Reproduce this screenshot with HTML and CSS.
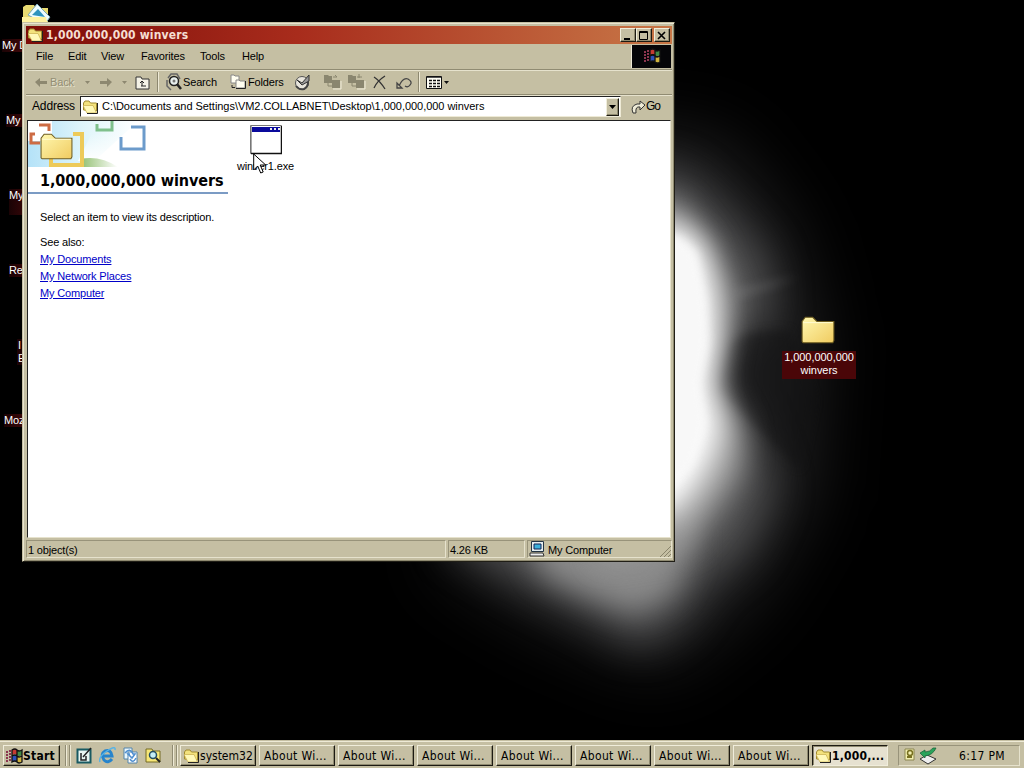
FILE: index.html
```html
<!DOCTYPE html>
<html lang="en">
<head>
    <meta charset="UTF-8">
    <title>1,000,000,000 winvers</title>
    <link rel="stylesheet" href="styles.css">
</head>
<body>
    <!-- shared icons -->
    <svg class="defs" width="0" height="0">
        <symbol id="folder-open" viewBox="0 0 16 14">
            <path d="M.5 10V3l1.500-2h4l1.500 2h6v8z" fill="#f3e27c" stroke="#a08a30"/>
            <path d="M0 5.500h10l3.500 7.500H4z" fill="#fff9b8" stroke="#c9ae4c" stroke-width=".7"/>
            <path d="M14.500 3v10.500H4" stroke="#222" fill="none"/>
        </symbol>
        <symbol id="folder-big" viewBox="0 0 34 30">
            <path d="M2 26V7l3-4h7l4 4h16v18l-1 2H3z" fill="url(#gold)" stroke="#6d5c20"/>
            <path d="M3 8h28" stroke="#fffbd0"/>
        </symbol>
        <linearGradient id="gold" x1="0" y1="0" x2="1" y2="1">
            <stop offset="0" stop-color="#fff8b0"/>
            <stop offset="1" stop-color="#f0cb60"/>
        </linearGradient>
        <symbol id="flag" viewBox="0 0 18 16">
            <path d="M7 2q3-2 5 0t5 0v5q-3 2-5 0t-5 0z" fill="#c63b32"/>
            <path d="M7 8q3-2 5 0t5 0v6q-3 2-5 0t-5 0z" fill="#2d50b8"/>
            <path d="M12 2q3 2 5 0v5q-3 2-5 0z" fill="#3f8b46"/>
            <path d="M12 8q3 2 5 0v6q-3 2-5 0z" fill="#d0b440"/>
            <path d="M7 2q3-2 5 0t5 0v12q-3 2-5 0t-5 0zM12 2v12M7 8q3-2 5 0t5 0" fill="none" stroke="#111" stroke-width="1.300"/>
            <path d="M1 4h2M4 3h2M1 7h2M4 6h2M1 10h2M4 9h2M1 13h2M4 12h2" stroke="#8c3650" stroke-width="2"/>
        </symbol>
    </svg>

    <div class="desktop">
        <svg class="wallpaper" width="1024" height="740" viewBox="0 0 1024 740">
            <defs>
                <filter id="b5" x="-50%" y="-50%" width="200%" height="200%" color-interpolation-filters="sRGB"><feGaussianBlur stdDeviation="5"/></filter>
                <filter id="b12" x="-50%" y="-50%" width="200%" height="200%" color-interpolation-filters="sRGB"><feGaussianBlur stdDeviation="14"/></filter>
                <filter id="b20" x="-50%" y="-50%" width="200%" height="200%" color-interpolation-filters="sRGB"><feGaussianBlur stdDeviation="20"/></filter>
                <filter id="b30" x="-50%" y="-50%" width="200%" height="200%" color-interpolation-filters="sRGB"><feGaussianBlur stdDeviation="34"/></filter>
            </defs>
            <path d="M600 130L720 140 790 230 820 340 810 500 750 600 660 670 540 620 440 560z" fill="#222223" filter="url(#b30)"/>
            <path d="M600 160L680 175 725 215 765 260 770 320 740 330 725 385 755 440 772 490 745 550 705 580 680 620 640 645 590 615 520 580 450 540z" fill="#525253" filter="url(#b20)"/>
            <path d="M520 530L690 520 690 560 672 595 635 612 590 596 545 575z" fill="#8a8a8a" filter="url(#b12)"/>
            <path d="M727 345Q740 330 790 330L815 400 800 470 765 435 716 390z" fill="#101011" opacity=".45" filter="url(#b5)"/>
            <path d="M580 215L676 200 714 250 734 300 726 340 718 385 744 430 742 470 720 505 690 545 600 560z" fill="#a0a0a0" filter="url(#b12)"/>
            <path d="M580 225L680 226 702 242 714 285 718 340 710 385 722 425 714 455 698 485 676 512 600 530z" fill="#fff" filter="url(#b12)"/>
            <path d="M600 235L678 236 696 252 706 300 708 345 700 385 706 425 692 465 674 485 600 490z" fill="#f8f8f8" filter="url(#b5)"/>
            <path d="M735 290L800 276 770 288 735 298z" fill="#999" opacity=".25" filter="url(#b5)"/>
        </svg>

        <!-- only the ends of these labels stick out beside the window -->
        <div class="shortcuts">
            <div class="shortcut s1">My D</div>
            <div class="shortcut s2">My</div>
            <div class="shortcut s3">My</div>
            <div class="shortcut s4">Re</div>
            <div class="shortcut s5">I<br>E</div>
            <div class="shortcut s6">Moz</div>
        </div>
        <svg class="docs-icon" width="32" height="22" viewBox="0 0 32 22">
            <path d="M2 21V4l3-2h8l2 3h12v16z" fill="#e9db72"/>
            <path d="M7 12L16 1l13 13-5 7z" fill="#eefcff" stroke="#7aa8b8"/>
            <path d="M11 12l6-6 7 8z" fill="#2f93bd"/>
            <path d="M1 14h24l2 8H1z" fill="#fff2a0"/>
        </svg>
        <div class="shortcut-folder">
            <svg width="36" height="32"><use href="#folder-big"/></svg>
            <span>1,000,000,000<br>winvers</span>
        </div>

        <div class="window">
            <div class="title-bar">
                <svg width="16" height="14"><use href="#folder-open"/></svg>
                <span class="title">1,000,000,000 winvers</span>
                <button class="cap"><svg width="12" height="11"><path d="M2 9h6" stroke="#000" stroke-width="2"/></svg></button>
                <button class="cap"><svg width="12" height="11"><path d="M1.500 1.500h8v8h-8zM1 2.500h9" fill="none" stroke="#000"/></svg></button>
                <button class="cap close"><svg width="12" height="11"><path d="M2 2l7 7M9 2l-7 7" stroke="#000" stroke-width="1.600"/></svg></button>
            </div>
            <div class="menu-bar">
                <span class="m-file">File</span>
                <span class="m-edit">Edit</span>
                <span class="m-view">View</span>
                <span class="m-fav">Favorites</span>
                <span class="m-tools">Tools</span>
                <span class="m-help">Help</span>
                <div class="throbber"><svg width="18" height="16"><use href="#flag"/></svg></div>
            </div>
            <div class="tool-bar">
                <svg width="140" height="24" viewBox="27 70 140 24" class="nav">
                    <path d="M35 82l5-4v3h7v3h-7v3zM112 82l-5-4v3h-7v3h7v3z" fill="#8d8870"/>
                    <path d="M85 81h5l-2.500 3zM122 81h5l-2.500 3z" fill="#8d8870"/>
                    <path d="M136 77h5l1 2h7v10h-13z" fill="#f4f2e6" stroke="#333"/>
                    <path d="M141 86h5M142 86v-4M140 83l2-2 2 2" stroke="#222" fill="none"/>
                    <path d="M157.500 72v20" stroke="#8d8870"/><path d="M158.500 72v20" stroke="#eeead6"/>
                </svg>
                <span class="back">Back</span>
                <svg width="16" height="18" class="i-search">
                    <path d="M2 5l3-4h6l3 5M1 7v6l4 4" stroke="#666" fill="none" stroke-width="1.500"/>
                    <circle cx="8" cy="8" r="4.500" fill="#e9f0ee" stroke="#222" stroke-width="1.500"/>
                    <circle cx="8" cy="8" r="1.500" fill="#777"/>
                    <path d="M11 11l4 5" stroke="#222" stroke-width="2.500"/>
                </svg>
                <span class="t-search">Search</span>
                <svg width="16" height="16" class="i-folders">
                    <path d="M1 1h3l1 1h4v7H1z" fill="#fffef0" stroke="#888"/>
                    <path d="M6 6h3l1 1h5v7H6z" fill="#fffef0" stroke="#888"/>
                    <path d="M6 14.500h9.500V7M2 11v2.500h3" stroke="#222" fill="none"/>
                </svg>
                <span class="t-folders">Folders</span>
                <svg width="170" height="24" viewBox="290 70 170 24">
                    <circle cx="303" cy="83" r="6.500" fill="#e8e5dc" stroke="#555"/>
                    <path d="M297 86q3 4 8 3 4-2 4-7" stroke="#444" stroke-width="2" fill="none"/>
                    <path d="M298 80l5 3 7-8v6l-7 4z" fill="#999" stroke="#333"/>
                    <path d="M325 75h4l1 1h3v7h-8zM333 80h8v8h-8zM349 75h4l1 1h3v7h-8zM357 80h8v8h-8z" fill="#8a866f"/>
                    <path d="M329 83v3h4M334 77h4l-2-2M353 83v3h4M360 74v4M358 77h5" stroke="#8a866f" fill="none"/>
                    <path d="M334 89h8v-8M358 89h8v-8" stroke="#f2eedb" fill="none"/>
                    <path d="M375 77q6 4 11 12M386 76q-8 5-11 12" stroke="#333" fill="none" stroke-width="1.300"/>
                    <path d="M398 88h5l-5-5zM400 86q4-9 9-7 5 3 2 6-2 3-5 1" fill="none" stroke="#444" stroke-width="1.300"/>
                    <path d="M419.500 72v20" stroke="#8d8870"/><path d="M420.500 72v20" stroke="#eeead6"/>
                    <path d="M427.500 76.500h15v12h-15z" fill="#fffef4" stroke="#111"/>
                    <path d="M428 77.500h14" stroke="#555"/>
                    <path d="M430 80.500h11M430 83.500h11M430 86.500h11" stroke="#111" stroke-width="1.500" stroke-dasharray="3 1"/>
                    <path d="M445 81h5l-2.500 3z" fill="#111"/>
                </svg>
            </div>
            <div class="address-bar">
                <span class="label">Address</span>
                <div class="field">
                    <svg width="16" height="14"><use href="#folder-open"/></svg>
                    <span class="path">C:\Documents and Settings\VM2.COLLABNET\Desktop\1,000,000,000 winvers</span>
                    <button class="drop"><svg width="7" height="4"><path d="M0 0h7L3.500 4z"/></svg></button>
                </div>
                <svg width="15" height="16" class="i-go"><path d="M2 14q-3-7 4-9h3V2l5 4-5 5V8q-5-1-4 6z" fill="#efecd8" stroke="#333"/></svg>
                <span class="go">Go</span>
            </div>
            <div class="view">
                <div class="side">
                    <svg class="banner" width="200" height="46" viewBox="0 0 200 46">
                        <defs>
                            <linearGradient id="sky"><stop offset="0" stop-color="#b4e2f8"/><stop offset=".5" stop-color="#dff5fa"/><stop offset="1" stop-color="#fff"/></linearGradient>
                            <linearGradient id="grass"><stop offset="0" stop-color="#8fbe6d"/><stop offset="1" stop-color="#fff"/></linearGradient>
                            <linearGradient id="fadew" x1="0" y1="0" x2="0" y2="1"><stop offset=".3" stop-color="#fff" stop-opacity="0"/><stop offset="1" stop-color="#fff"/></linearGradient>
                        </defs>
                        <path d="M24 0h86L60 46H0V20h24z" fill="url(#sky)"/>
                        <path d="M70 0h50L80 40H50z" fill="url(#fadew)"/>
                        <path d="M52 46v-8q20-4 38 8z" fill="url(#grass)"/>
                        <path d="M11 4h10v6M3 12v10h9M3 16v-3h4" fill="none" stroke="#cd6b43" stroke-width="3"/>
                        <path d="M69 3v6h15V0" fill="none" stroke="#7fc08c" stroke-width="3"/>
                        <path d="M103 6h13v22H93V16" fill="none" stroke="#6c9bcb" stroke-width="3"/>
                        <path d="M45 13h9v31H23V34" fill="none" stroke="#edca59" stroke-width="4"/>
                        <svg x="11" y="10" width="35" height="31"><use href="#folder-big"/></svg>
                    </svg>
                    <h1>1,000,000,000 winvers</h1>
                    <p class="hint">Select an item to view its description.</p>
                    <p class="also">See also:</p>
                    <a>My Documents</a>
                    <a>My Network Places</a>
                    <a>My Computer</a>
                </div>
                <div class="file">
                    <svg width="32" height="30" viewBox="0 0 32 30">
                        <path d="M.5.500h31v28H.5z" fill="#fff" stroke="#777"/>
                        <path d="M1.500 1v27" stroke="#aaa"/>
                        <path d="M1 28.500h30.500V1" fill="none" stroke="#111" stroke-width="1.500"/>
                        <path d="M2 2h28v5H2z" fill="#0a0a9c"/>
                        <path d="M20 4h2M24 4h2M28 4h2" stroke="#eee" stroke-width="2"/>
                    </svg>
                    <span>winver1.exe</span>
                </div>
            </div>
            <div class="status-bar">
                <div class="cell objects">1 object(s)</div>
                <div class="cell size">4.26 KB</div>
                <div class="cell zone">
                    <svg width="16" height="16"><path d="M2.500.500h12v10h-12z" fill="#e5eef0" stroke="#234"/><path d="M5 3h7v5H5z" fill="#3cb1dc" stroke="#125"/><path d="M1 12h13l1 3H1z" fill="#eee" stroke="#333"/></svg>
                    <span>My Computer</span>
                    <svg class="grip" width="12" height="12"><path d="M1 12L12 1M5 12l7-7M9 12l3-3" stroke="#89846b"/></svg>
                </div>
            </div>
        </div>

        <svg class="cursor" width="14" height="22" viewBox="0 0 14 22"><path d="M.7 1v16l4-4 3 7 2.500-1-3-7h5.500z" fill="#fff" stroke="#000"/></svg>
    </div>

    <div class="taskbar">
        <button class="start"><svg width="18" height="16"><use href="#flag"/></svg>Start</button>
        <div class="handle"></div>
        <div class="quick">
            <svg width="17" height="17"><path d="M1.500 2.500h13v13h-13z" fill="#e8f5f1" stroke="#185a62" stroke-width="2"/><path d="M5 6v7h5V9M7 10l8-9" stroke="#222" fill="none" stroke-width="1.500"/></svg>
            <svg width="17" height="17"><path d="M13 12q-4 5-8 1-4-6 1-9 6-2 7 5H4" fill="none" stroke="#2784cc" stroke-width="3"/><path d="M1 15Q-1 10 8 4t8-1" fill="none" stroke="#58b3e5" stroke-width="1.500"/></svg>
            <svg width="17" height="17"><path d="M2 1h8v11H2z" fill="#eaf7fd" stroke="#5384ab"/><path d="M6 5h9v11H6z" fill="#fff" stroke="#5384ab"/><path d="M3 6q5-6 8 1h2l-3 4-4-4h2M14 11q-3 6-6 1" fill="none" stroke="#4f8fd0" stroke-width="1.500"/></svg>
            <svg width="17" height="17"><path d="M1 2h6l1 2h7v11H1z" fill="#f7e777" stroke="#746a25"/><circle cx="8" cy="8" r="3.500" fill="#c5eef6" stroke="#244e63" stroke-width="1.500"/><path d="M11 11l4 4" stroke="#222" stroke-width="2"/></svg>
        </div>
        <div class="handle"></div>
        <div class="tasks">
            <button class="task folder"><svg width="16" height="14"><use href="#folder-open"/></svg>system32</button>
            <button class="task">About Wi...</button>
            <button class="task">About Wi...</button>
            <button class="task">About Wi...</button>
            <button class="task">About Wi...</button>
            <button class="task">About Wi...</button>
            <button class="task">About Wi...</button>
            <button class="task">About Wi...</button>
            <button class="task folder active"><svg width="16" height="14"><use href="#folder-open"/></svg>1,000,...</button>
        </div>
        <div class="tray">
            <svg width="36" height="18"><path d="M3 2h9v11H3z" fill="#f3efb0" stroke="#8b8650"/><circle cx="8" cy="6" r="2.500" fill="none" stroke="#777020" stroke-width="1.500"/><path d="M5 10h5" stroke="#777020" stroke-width="2"/><path d="M18 12l7-4 9 4-8 5z" fill="#eee" stroke="#333"/><path d="M18 6l5-3v2q5 0 8-4h3q-3 7-11 8v2z" fill="#29a35a" stroke="#125b33" stroke-width=".7"/></svg>
            <span class="clock">6:17 PM</span>
        </div>
    </div>
</body>
</html>
```
FILE: styles.css
```css
* {
    box-sizing: border-box;
}

body {
    margin: 0;
    width: 1024px;
    height: 768px;
    overflow: hidden;
    background: #000;
    font-family: "Liberation Sans", Arial, sans-serif;
    font-size: 11px;
    line-height: 13px;
    letter-spacing: -0.16px;
    color: #000;
}

button {
    font: inherit;
    letter-spacing: inherit;
    color: inherit;
    padding: 0;
    border: 1px solid;
    border-color: #f0eddb #1c1a12 #1c1a12 #f0eddb;
    background: #c5bfa3;
    box-shadow: inset -1px -1px 0 #8f8a70;
}

svg {
    display: block;
    flex: none;
}

.defs {
    position: absolute;
}

.desktop {
    position: relative;
    height: 740px;
    overflow: hidden;
}

.wallpaper {
    position: absolute;
    left: 0;
    top: 0;
}

/* desktop shortcuts */
.shortcut {
    position: absolute;
    width: 22px;
    white-space: nowrap;
    color: #fff;
    background: linear-gradient(90deg, #1a0305, #3c0709 20px);
}

.s1 { top: 39px; left: 2px; }
.s2 { top: 114px; left: 6px; }
.s3 { top: 189px; left: 9px; height: 26px; }
.s4 { top: 264px; left: 9px; }
.s5 { top: 339px; left: 17px; padding-left: 1px; }
.s6 { top: 414px; left: 4px; }

.docs-icon {
    position: absolute;
    left: 21px;
    top: 3px;
}

.shortcut-folder {
    position: absolute;
    left: 782px;
    top: 314px;
    width: 74px;
    display: flex;
    flex-direction: column;
    align-items: center;
    gap: 5px;
    color: #fff;
    text-align: center;
    letter-spacing: -0.05px;
}

.shortcut-folder svg {
    margin-left: -2px;
}

.shortcut-folder span {
    width: 74px;
    height: 28px;
    background: #4a0608;
}

/* explorer window */
.window {
    position: absolute;
    left: 22px;
    top: 22px;
    width: 653px;
    height: 540px;
    padding: 3px 2px 2px 3px;
    display: flex;
    flex-direction: column;
    background: #c5bfa3;
    border: 1px solid;
    border-color: #c5bfa3 #201e16 #201e16 #c5bfa3;
    box-shadow: inset 1px 1px 0 #e8e4d0, inset -1px -1px 0 #8f8a70;
}

.title-bar {
    height: 18px;
    padding: 0 2px 0 2px;
    display: flex;
    align-items: center;
    background: linear-gradient(90deg, #7d0c08, #a82c1c 42%, #c87747);
    color: #f5ded2;
}

.title {
    flex: 1;
    padding-left: 2px;
    font: bold 12px "DejaVu Sans Condensed", "DejaVu Sans", sans-serif;
    letter-spacing: 0.18px;
}

.cap {
    width: 16px;
    height: 14px;
    padding-left: 1px;
}

.close {
    margin-left: 2px;
}

.menu-bar {
    height: 26px;
    display: flex;
    align-items: center;
    padding-left: 10px;
    border-bottom: 1px solid #908b72;
}

.m-file { width: 32px; }
.m-edit { width: 33px; }
.m-view { width: 40px; }
.m-fav { width: 59px; }
.m-tools { width: 42px; }

.throbber {
    margin-left: auto;
    width: 40px;
    height: 23px;
    padding: 3px 11px;
    margin-right: 1px;
    background: #050508;
    border-left: 1px solid #eeead6;
}

.tool-bar {
    height: 25px;
    display: flex;
    align-items: center;
    border-top: 1px solid #e6e2cd;
    border-bottom: 1px solid #908b72;
    padding: 0 0 1px 1px;
}

.nav {
    margin-right: -117px;
}

.back {
    width: 116px;
    color: #938e75;
    text-shadow: 1px 1px 0 #e6e2cd;
}

.t-search {
    width: 45px;
    padding-left: 1px;
}

.i-folders {
    margin-left: 3px;
}

.t-folders {
    width: 43px;
    padding-left: 2px;
}

.address-bar {
    height: 25px;
    display: flex;
    align-items: center;
    border-top: 1px solid #e6e2cd;
    padding: 0 6px 3px 6px;
}

.label {
    width: 48px;
    font-size: 12px;
    letter-spacing: -0.15px;
}

.field {
    width: 541px;
    height: 21px;
    padding: 1px 1px 1px 2px;
    display: flex;
    align-items: center;
    background: #fff;
    border: 1px solid;
    border-color: #222 #eeead6 #eeead6 #222;
}

.path {
    flex: 1;
    padding-left: 3px;
    white-space: nowrap;
    letter-spacing: -0.04px;
}

.drop {
    width: 13px;
    height: 18px;
    padding-left: 2px;
}

.i-go {
    margin-left: 10px;
}

.go {
    font-size: 12px;
    letter-spacing: -1px;
}

/* folder contents */
.view {
    height: 418px;
    margin: 0 1px;
    display: flex;
    background: #fff;
    border: 1px solid;
    border-color: #222 #e6e2cd #e6e2cd #222;
}

.side {
    width: 200px;
}

.side h1 {
    margin: 0;
    height: 27px;
    padding: 5px 0 0 12px;
    font: bold 16px/18px "DejaVu Sans Condensed", "DejaVu Sans", sans-serif;
    letter-spacing: -0.06px;
    white-space: nowrap;
    border-bottom: 2px solid #7b9bc4;
}

.side p {
    margin: 0;
    padding-left: 12px;
}

.side .hint {
    padding-top: 17px;
}

.side .also {
    padding: 12px 0 1px 12px;
}

.side a {
    display: table;
    margin: 2px 0 0 12px;
    line-height: 15px;
    color: #0000c8;
    text-decoration: underline;
}

.file {
    width: 75px;
    padding-top: 4px;
    display: flex;
    flex-direction: column;
    align-items: center;
    gap: 5px;
}

.status-bar {
    height: 21px;
    padding-top: 2px;
    display: flex;
    gap: 2px;
}

.cell {
    height: 18px;
    padding-left: 1px;
    line-height: 18px;
    border: 1px solid;
    border-color: #98937a #e6e2cd #e6e2cd #98937a;
}

.objects { width: 420px; }
.size { width: 77px; }

.zone {
    flex: 1;
    display: flex;
    gap: 3px;
}

.grip {
    margin: 4px 0 0 auto;
}

.cursor {
    position: absolute;
    left: 253px;
    top: 153px;
}

/* taskbar */
.taskbar {
    height: 28px;
    padding: 4px 4px 2px 3px;
    display: flex;
    background: #c5bfa3;
    border-top: 1px solid #c5bfa3;
    box-shadow: inset 0 1px 0 #eeead6;
    font: 12px "DejaVu Sans Condensed", "DejaVu Sans", sans-serif;
    letter-spacing: 0.35px;
}

.start {
    width: 57px;
    flex: none;
    display: flex;
    align-items: center;
    padding-left: 1px;
    font-weight: bold;
    letter-spacing: 0.25px;
}

.handle {
    width: 5px;
    flex: none;
    margin: 0 3px 0 5px;
    border: solid #908b72;
    border-width: 0 1px;
    box-shadow: 1px 0 0 #eeead6, inset 1px 0 0 #eeead6;
}

.quick {
    width: 94px;
    flex: none;
    padding-left: 3px;
    display: flex;
    gap: 6px;
    align-items: center;
}

.tasks {
    width: 708px;
    flex: none;
    display: flex;
    gap: 3px;
}

.task {
    width: 76px;
    flex: none;
    padding-left: 4px;
    text-align: left;
    white-space: nowrap;
    overflow: hidden;
}

.folder {
    display: flex;
    align-items: center;
    padding-left: 3px;
    letter-spacing: 0;
}

.active {
    font-weight: bold;
    letter-spacing: 0.2px;
    background: #e6e1d0;
    border-color: #1c1a12 #f0eddb #f0eddb #1c1a12;
    box-shadow: inset 1px 1px 0 #8f8a70;
}

.tray {
    flex: 1;
    margin-left: 10px;
    padding: 0 14px 0 3px;
    display: flex;
    align-items: center;
    justify-content: space-between;
    border: 1px solid;
    border-color: #98937a #e6e2cd #e6e2cd #98937a;
}
```
